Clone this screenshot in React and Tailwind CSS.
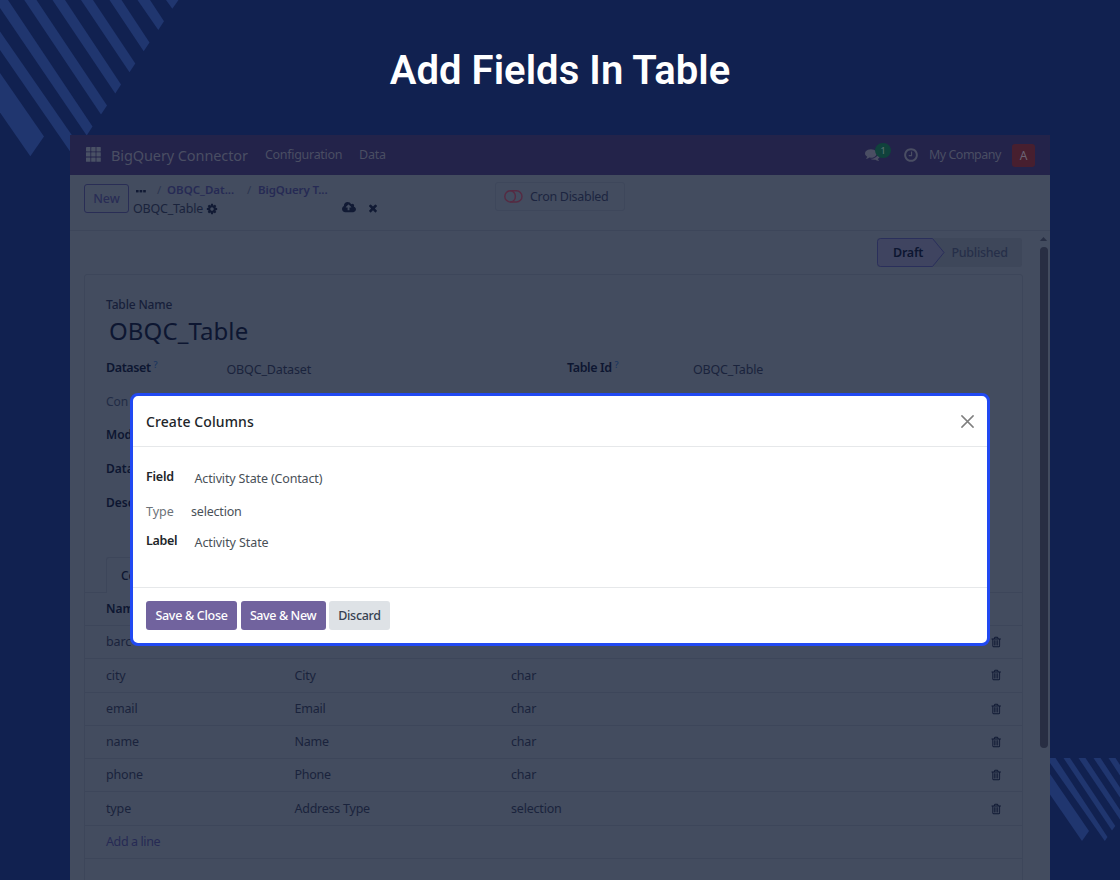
const TRASH = "M704 1376v-704q0-14-9-23t-23-9h-64q-14 0-23 9t-9 23v704q0 14 9 23t23 9h64q14 0 23-9t9-23zm256 0v-704q0-14-9-23t-23-9h-64q-14 0-23 9t-9 23v704q0 14 9 23t23 9h64q14 0 23-9t9-23zm256 0v-704q0-14-9-23t-23-9h-64q-14 0-23 9t-9 23v704q0 14 9 23t23 9h64q14 0 23-9t9-23zm160-864h-896v948q0 22 7 40.500t14.500 27 10.500 8.500h832q3 0 10.500-8.500t14.500-27 7-40.500v-948zm-672-128h448l-48-117q-7-9-17-11h-317q-10 2-17 11zm928 32v64q0 14-9 23t-23 9h-96v948q0 83-47 143.500t-113 60.500h-832q-66 0-113-58.500t-47-141.500v-952h-96q-14 0-23-9t-9-23v-64q0-14 9-23t23-9h309l70-167q15-37 54-63t79-26h320q40 0 79 26t54 63l70 167h309q14 0 23 9t9 23z";
const CLOCK = "M1024 544v448q0 14-9 23t-23 9h-320q-14 0-23-9t-9-23v-64q0-14 9-23t23-9h224v-352q0-14 9-23t23-9h64q14 0 23 9t9 23zm416 352q0-148-73-273t-198-198-273-73-273 73-198 198-73 273 73 273 198 198 273 73 273-73 198-198 73-273zm224 0q0 209-103 385.5t-279.5 279.5-385.5 103-385.5-103-279.5-279.5-103-385.5 103-385.5 279.5-279.5 385.5-103 385.5 103 279.5 279.5 103 385.5z";
const CLOSE = "M1490 1322q0 40-28 68l-136 136q-28 28-68 28t-68-28l-294-294-294 294q-28 28-68 28t-68-28l-136-136q-28-28-28-68t28-68l294-294-294-294q-28-28-28-68t28-68l136-136q28-28 68-28t68 28l294 294 294-294q28-28 68-28t68 28l136 136q28 28 28 68t-28 68l-294 294 294 294q28 28 28 68z";
const COMMENTS = "M1408 768q0 139-94 257t-256.5 186.5-353.5 68.5q-86 0-176-16-124 88-278 128-36 9-86 16h-3q-11 0-20.5-8t-11.5-21q-1-3-1-6.5t.5-6.5 2-6l2.5-5 3.5-5.5 4-5 4.5-5 4-4.5q5-6 23-25t26-29.5 22.5-29 25-38.5 20.5-44q-124-72-195-177t-71-224q0-139 94-257t256.5-186.5 353.5-68.5 353.5 68.5 256.5 186.5 94 257zm384 256q0 120-71 224.5t-195 176.5q10 24 20.5 44t25 38.5 22.5 29 26 29.5 23 25q1 1 4 4.5t4.5 5 4 5 3.5 5.5l2.5 5 2 6 .5 6.5-1 6.5q-3 14-13 22t-22 7q-50-7-86-16-154-40-278-128-90 16-176 16-271 0-472-132 58 4 88 4 161 0 309-45t264-129q125-92 192-212t67-254q0-77-23-152 129 71 204 178t75 230z";
const UPLOAD = "M1216 864q0-14-9-23l-352-352q-9-9-23-9t-23 9l-351 351q-10 12-10 24 0 14 9 23t23 9h224v352q0 13 9.5 22.5t22.5 9.5h192q13 0 22.5-9.5t9.5-22.5v-352h224q13 0 22.5-9.5t9.5-22.5zm640 288q0 159-112.5 271.5t-271.5 112.5h-1088q-185 0-316.5-131.5t-131.5-316.5q0-130 70-240t188-165q-2-30-2-43 0-212 150-362t362-150q156 0 285.5 87t188.5 231q71-62 166-62 106 0 181 75t75 181q0 76-41 138 130 31 213.5 135.5t83.5 238.5z";
const COG = "M1152 896q0-106-75-181t-181-75-181 75-75 181 75 181 181 75 181-75 75-181zm512-109v222q0 12-8 23t-20 13l-185 28q-19 54-39 91 35 50 107 138 10 12 10 25t-9 23q-27 37-99 108t-94 71q-12 0-26-9l-138-108q-44 23-91 38-16 136-29 186-7 28-36 28h-222q-14 0-24.5-8.5t-11.5-21.5l-28-184q-49-16-90-37l-141 107q-10 9-25 9-14 0-25-11-126-114-165-168-7-10-7-23 0-12 8-23 15-21 51-66.5t54-70.5q-27-50-41-99l-183-27q-13-2-21-12.5t-8-23.5v-222q0-12 8-23t19-13l186-28q14-46 39-92-40-57-107-138-10-12-10-24 0-10 9-23 26-36 98.5-107.5t94.5-71.5q13 0 26 10l138 107q44-23 91-38 16-136 29-186 7-28 36-28h222q14 0 24.5 8.5t11.5 21.5l28 184q49 16 90 37l142-107q9-9 24-9 13 0 25 10 129 119 165 170 7 8 7 22 0 12-8 23-15 21-51 66.5t-54 70.5q26 50 41 98l183 28q13 2 21 12.5t8 23.5z";

function Glyph({ d, box = "0 0 1792 1792", className }) {
  return (
    <svg viewBox={box} className={className} fill="currentColor">
      <path d={d} />
    </svg>
  );
}

const ROWS = [
  ["barc", "", ""],
  ["city", "City", "char"],
  ["email", "Email", "char"],
  ["name", "Name", "char"],
  ["phone", "Phone", "char"],
  ["type", "Address Type", "selection"],
];

function NavBar() {
  return (
    <div className="flex h-10 items-center bg-[#23234a] text-[#4a4e63] shrink-0">
      <svg viewBox="0 0 15 15" className="mb-[2px] ml-4 h-[15px] w-[15px] text-[#4a5165]" fill="currentColor">
        {[0, 5.2, 10.4].map((y) =>
          [0, 5.2, 10.4].map((x) => <rect key={x + "-" + y} x={x} y={y} width="4.4" height="4.4" rx=".4" />)
        )}
      </svg>
      <span className="ml-[10px] w-[154px] pt-px text-[14.5px] tracking-[-0.1px]">BigQuery Connector</span>
      <span className="w-[94px] pt-px text-[12.5px] tracking-[-0.3px]">Configuration</span>
      <span className="pt-px text-[12.5px] tracking-[-0.2px]">Data</span>
      <div className="relative ml-auto mr-[23px] h-4 w-4">
        <Glyph d={COMMENTS} className="ml-px h-[15px] w-[15px]" />
        <span className="absolute left-[11px] -top-[4px] flex h-[15px] w-4 items-center justify-center rounded-full bg-[#10423c] text-[9px] font-medium text-[#56706f]">1</span>
      </div>
      <Glyph d={CLOCK} className="mr-[10px] h-4 w-4" />
      <span className="w-[83px] pt-px text-[12.5px] tracking-[-0.5px]">My Company</span>
      <span className="mr-[15px] flex h-[23px] w-[23px] items-center justify-center rounded-[3px] bg-[#471f2f] pt-px text-[12px] text-[#6b6474]">A</span>
    </div>
  );
}

function ControlPanel() {
  return (
    <div className="flex h-[56px] shrink-0 border-b border-[#3d465a]">
      <div className="ml-[14px] mt-[9px] flex h-[29px] w-[45px] items-center justify-center rounded-[3px] border border-[#292d55] pt-px text-[12.5px] font-medium text-[#292d55]">New</div>
      <div className="ml-1 mt-[5px] w-[206px] whitespace-nowrap">
        <div className="flex h-[19px] items-center text-[11.5px] font-semibold text-[#262a54]">
          <svg viewBox="0 0 10 3" className="mr-[11px] ml-[3px] mt-[3px] h-[3px] w-[10px] text-[#111a34]" fill="currentColor">
            <rect x="0" y="0" width="2.6" height="2.4" /><rect x="3.6" y="0" width="2.6" height="2.4" /><rect x="7.2" y="0" width="2.6" height="2.4" />
          </svg>
          <span className="w-[10px] font-normal text-[#2c3550]">/</span>
          <span className="w-[80px]">OBQC_Dat...</span>
          <span className="w-[11px] font-normal text-[#2c3550]">/</span>
          <span className="tracking-[-0.1px]">BigQuery T...</span>
        </div>
        <div className="flex h-[19px] items-center text-[12.5px] text-[#1a233c]">
          <span className="w-[73px] pt-px tracking-[-0.2px]">OBQC_Table</span>
          <Glyph d={COG} className="h-3 w-3 text-[#111a34]" />
        </div>
      </div>
      <Glyph d={UPLOAD} box="-64 0 1920 1792" className="ml-[3px] mt-[26px] h-[13px] w-[14px] text-[#111a34]" />
      <Glyph d={CLOSE} className="ml-[11px] mt-[27px] h-3 w-3 text-[#111a34]" />
      <div className="ml-[116px] mt-[7px] flex h-[29px] w-[130px] items-center rounded-[3px] border border-[#3e475b] text-[12.5px] text-[#1c2540]">
        <svg viewBox="0 0 19 13" className="ml-[8px] mr-[7px] h-[13px] w-[19px]" fill="none" stroke="#562a42" strokeWidth="1.4">
          <rect x=".8" y=".8" width="17.2" height="11.2" rx="5.6" />
          <path d="M6.400 .8a5 5.600 0 0 1 0 11.200" />
        </svg>
        <span className="pt-px tracking-[-0.3px]">Cron Disabled</span>
      </div>
    </div>
  );
}

function FormSheet() {
  return (
    <div className="ml-[14px] mt-[7px] flex h-[620px] w-[939px] flex-col rounded-t-[3px] border border-[#3d465a] text-[12px] text-[#1a233c]">
      <div className="ml-[21px] mt-[21px] h-[18px] font-medium leading-[18px] tracking-[-0.15px] text-[#171f3a]">Table Name</div>
      <div className="ml-[24px] h-[34px] text-[24px] leading-[34px] tracking-[0.1px] text-[#0d1631]">OBQC_Table</div>
      <div className="ml-[21px] mt-[11px] flex h-[34px] text-[12.5px] leading-[18px]">
        <span className="flex w-[120.500px] font-semibold tracking-[-0.4px] text-[#0d1631]">Dataset<span className="-mt-[3px] ml-[3px] text-[9px] font-medium text-[#1a3560]">?</span></span>
        <span className="mt-[2px] w-[340.500px] tracking-[-0.15px]">OBQC_Dataset</span>
        <span className="flex w-[126px] font-semibold tracking-[-0.4px] text-[#0d1631]">Table Id<span className="-mt-[3px] ml-[3px] text-[9px] font-medium text-[#1a3560]">?</span></span>
        <span className="mt-[2px] tracking-[-0.2px]">OBQC_Table</span>
      </div>
      <div className="ml-[21px] h-[33px] leading-[18px] text-[#212b45]">Con</div>
      <div className="ml-[21px] h-[34px] font-semibold leading-[18px] text-[#0d1631]">Mod</div>
      <div className="ml-[21px] h-[34px] font-semibold leading-[18px] text-[#0d1631]">Data</div>
      <div className="ml-[21px] h-[64px] font-semibold leading-[18px] text-[#0d1631]">Desc</div>
      <div className="-mt-px flex h-[36px] border-b border-[#3d465a]">
        <div className="ml-[21px] flex h-[36px] w-[80px] items-center rounded-t-[3px] border border-b-0 border-[#3d465a] bg-[#434c5f] pl-[14px] font-medium text-[#0d1631]">Co</div>
      </div>
      <div className="-mt-px flex h-[34px] items-center border-b border-[#3d465a] pl-[21px] font-semibold text-[#0d1631]">
        <span className="w-[188px]">Nam</span>
      </div>
      {ROWS.map(([name, label, type]) => (
        <div key={name} className="flex h-[33.300px] shrink-0 items-center border-b border-[#3d465a] pl-[21px] text-[12.5px] tracking-[-0.15px]">
          <span className="w-[188.500px] pt-px">{name}</span>
          <span className="w-[216.500px] pt-px tracking-[-0.25px]">{label}</span>
          <span className="pt-px tracking-[-0.2px]">{type}</span>
          <Glyph d={TRASH} className="ml-auto mr-[20px] h-3 w-3 text-[#0f1833]" />
        </div>
      ))}
      <div className="flex h-[33.300px] shrink-0 items-center border-b border-[#3d465a] pl-[21px] pt-px text-[12.5px] tracking-[-0.4px] text-[#262a54]">Add a line</div>
    </div>
  );
}

function Dialog() {
  return (
    <div className="absolute left-[130px] top-[393px] flex h-[253px] w-[860px] flex-col overflow-hidden rounded-[8px] border-[3px] border-[#2149f2] bg-white text-[12.5px] text-[#495057]">
      <div className="flex h-[51px] shrink-0 items-center justify-between border-b border-[#e6e8ea] pl-[13px] pr-[13px]">
        <span className="text-[14px] font-medium tracking-[0.1px] text-[#212529]">Create Columns</span>
        <svg viewBox="0 0 13 13" className="h-[13px] w-[13px]" stroke="#7f7f7f" strokeWidth="1.5" strokeLinecap="round">
          <path d="M.9.9l11.2 11.2M12.1.9L.9 12.1" />
        </svg>
      </div>
      <div className="h-[141px] shrink-0 border-b border-[#e6e8ea] pl-[13px] pt-[21px]">
        <div className="flex h-[34px] leading-[18px]">
          <span className="w-[48.500px] font-semibold tracking-[-0.2px] text-[#212529]">Field</span>
          <span className="mt-[2px] tracking-[-0.15px]">Activity State (Contact)</span>
        </div>
        <div className="flex h-[30px] leading-[18px]">
          <span className="w-[45px] pt-px text-[#6c7278]">Type</span>
          <span className="pt-px tracking-[-0.2px]">selection</span>
        </div>
        <div className="flex h-[30px] leading-[18px]">
          <span className="w-[48.500px] font-semibold tracking-[-0.35px] text-[#212529]">Label</span>
          <span className="mt-[2px] tracking-[-0.1px]">Activity State</span>
        </div>
      </div>
      <div className="flex gap-[3.500px] pl-[13px] pt-[13px] font-medium">
        <span className="flex h-[29px] w-[91px] items-center justify-center rounded-[3px] bg-[#71639e] pt-px tracking-[-0.3px] text-white">Save &amp; Close</span>
        <span className="flex h-[29px] w-[85px] items-center justify-center rounded-[3px] bg-[#71639e] pt-px tracking-[-0.4px] text-white">Save &amp; New</span>
        <span className="flex h-[29px] w-[61px] items-center justify-center rounded-[3px] bg-[#dee2e6] pt-px tracking-[-0.3px] text-[#374151]">Discard</span>
      </div>
    </div>
  );
}

export default function App() {
  return (
    <div className="relative flex h-[880px] w-[1120px] flex-col overflow-hidden bg-[#112150] font-['Noto_Sans',sans-serif]">
      <svg viewBox="0 0 240 170" className="absolute left-0 top-0 h-[170px] w-[240px]" fill="#20366f">
        <path d="M0 73L44 136.500L30.300 156.300L0 112.500z" />
        <path d="M0 31.500L78 144L71.500 153.500L0 50z" />
        <path d="M-4 -6L8 0L92.500 126.500L86.700 135.500L0 8z" />
        <path d="M24.300 0H36.500L107 105.500L101 114.500z" />
        <path d="M52.500 0H65L121 84.500L115.300 93.500z" />
        <path d="M81 0H93L135.300 63.500L129.500 72.300z" />
        <path d="M109.500 0H121.500L149.500 42.500L143.700 51.300z" />
        <path d="M137.500 0H150L164 21.300L158.300 30z" />
        <path d="M166 0H178.500L172.300 8.700z" />
      </svg>
      <svg viewBox="0 0 80 100" className="absolute left-[1040px] top-[750px] h-[100px] w-[80px]" fill="#20366f">
        <path d="M0 15L10 24L49 81L42 91L0 30z" />
        <path d="M10 8H15.500L67.500 87L64.800 91L10 13z" />
        <path d="M23.500 8H30L75.300 76L72 80.500z" />
        <path d="M38.500 8H45.500L84 66L80 69.500z" />
        <path d="M53.500 8H60.500L84 43.500V53.500z" />
        <path d="M68.500 8H75.500L84 21V31.500z" />
      </svg>
      <h1 className="h-[135px] shrink-0 pt-[47px] text-center font-['Roboto',sans-serif] text-[40px] font-semibold leading-[48px] tracking-[0.06px] text-white">Add Fields In Table</h1>
      <div className="relative ml-[70px] flex h-[745px] w-[980px] flex-col overflow-hidden bg-[#434c5f]">
        <NavBar />
        <ControlPanel />
        <div className="flex grow">
          <div className="w-[966px]">
            <div className="mt-[7px] flex h-[29px] w-[952px] justify-end">
              <div className="relative flex h-[29px] w-[145px] items-center overflow-hidden rounded-[3px] bg-[#3e475a] text-[12.5px]">
                <svg viewBox="0 0 68 29" className="absolute left-0 top-0 h-[29px] w-[68px]" fill="#3f4460" stroke="#2a2f5b">
                  <path d="M3.500 .5H55.500L67 14.500L55.500 28.500H3.500Q.5 28.500 .5 25.500V3.500Q.5 .5 3.500 .5z" />
                </svg>
                <span className="relative ml-[16px] w-[58.500px] pt-px font-semibold tracking-[-0.25px] text-[#0d1631]">Draft</span>
                <span className="relative pt-px font-medium tracking-[-0.3px] text-[#262f49]">Published</span>
              </div>
            </div>
            <FormSheet />
          </div>
          <div className="ml-[3px] mt-[6px] flex flex-col items-center">
            <svg viewBox="0 0 9 5" className="h-[4px] w-[9px]" fill="#282f44"><path d="M0 5L4.500 0L9 5z" /></svg>
            <div className="mt-[6px] h-[501px] w-[8px] rounded-full bg-[#282e43]" />
          </div>
        </div>
      </div>
      <Dialog />
    </div>
  );
}
